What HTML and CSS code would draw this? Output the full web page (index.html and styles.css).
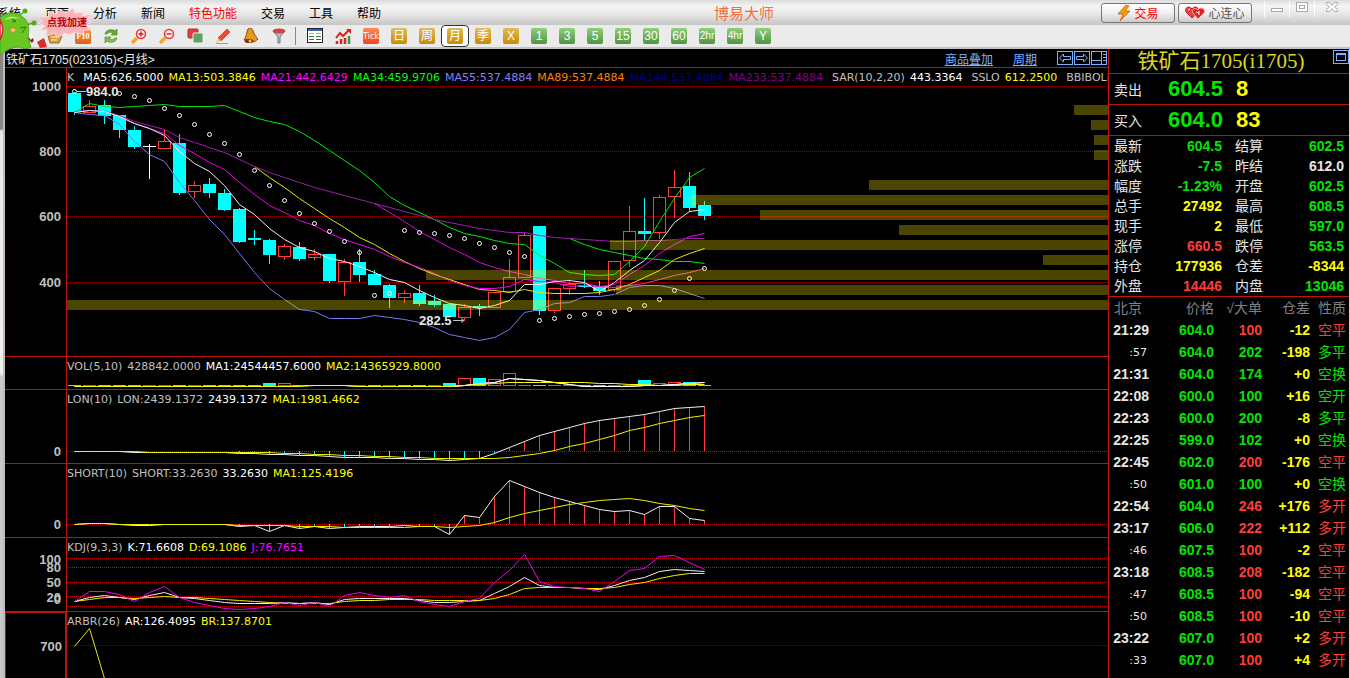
FILE: index.html
```html
<!DOCTYPE html>
<html lang="zh-CN">
<head>
  <meta charset="UTF-8" />
  <meta name="viewport" content="width=device-width, initial-scale=1.0"/>
  <title>博易大师</title>
  <link rel="stylesheet" href="styles.css">
</head>
<body>
  <header class="titlebar">
    <nav class="menu">
      <a href="#">系统</a>
      <a href="#">页面</a>
      <a href="#">分析</a>
      <a href="#">新闻</a>
      <a href="#" class="hot">特色功能</a>
      <a href="#">交易</a>
      <a href="#">工具</a>
      <a href="#">帮助</a>
    </nav>
    <h1 class="app-name">博易大师</h1>
    <div class="titlebar-right">
      <button class="pill trade">
        <svg width="14" height="16" viewBox="0 0 14 16"><path d="M9 0L1 9h5L3 16 13 6H8l4-5z" fill="#ff9a00" stroke="#a85a10" stroke-width=".7"/></svg>
        交易
      </button>
      <button class="pill">
        <svg width="20" height="14" viewBox="0 0 20 14"><path d="M7 12L1 6C-1 2 4-1 7 3c3-4 8-1 6 3z" fill="#f04040" stroke="#c81818"/><path d="M13 13L8 7c-2-4 2-6 5-3 3-4 8-1 6 3z" fill="#e62020" stroke="#ffb0b0"/><path d="M3 4l2-1M11 6l3 1M14 5v4" stroke="#fff" fill="none"/></svg>
        心连心
      </button>
      <div class="window-buttons">
        <button aria-label="最小化"><svg width="12" height="12"><rect x=".5" y="7.5" width="11" height="3"/></svg></button>
        <button aria-label="还原"><svg width="12" height="12"><rect x=".5" y="1.5" width="11" height="9"/><rect x="3.5" y="4.5" width="5" height="3"/></svg></button>
        <button aria-label="关闭"><svg width="12" height="12"><path d="M.5 1.5h3l2.500 3 2.500-3h3v2l-3 2.500 3 2.500v2h-3l-2.500-3-2.500 3h-3v-2l3-2.500-3-2.500z"/></svg></button>
      </div>
    </div>
  </header>

  <div class="toolbar">
    <button aria-label="首页"><svg width="16" height="16"><path d="M1 8l6-6 8 6-3 7H3z" fill="#d99a3a" stroke="#a86c1c"/><path d="M4 9h7M4 12h6" stroke="#fff0c8"/></svg></button>
    <button><span class="tile f10">F10</span></button>
    <button aria-label="刷新"><svg width="16" height="16"><path d="M2 6c1-5 8-5 10-3l2-2v6H8l2-2C8 4 5 4 4 6z" fill="#6aa92c" stroke="#3f7d14" stroke-width=".6"/><path d="M14 10c-1 5-8 5-10 3l-2 2V9h6l-2 2c2 1 5 1 6-1z" fill="#86bd4a" stroke="#3f7d14" stroke-width=".6"/></svg></button>
    <button aria-label="放大"><svg width="16" height="16"><path d="M1 15l5-5" stroke="#f5a81c" stroke-width="3.500"/><circle cx="10" cy="6" r="4.500" fill="#ffeaea" stroke="#e04040" stroke-width="1.600"/><path d="M7.500 6h5M10 3.500v5" stroke="#d02020" stroke-width="1.400"/></svg></button>
    <button aria-label="缩小"><svg width="16" height="16"><path d="M1 15l5-5" stroke="#f5a81c" stroke-width="3.500"/><circle cx="10" cy="6" r="4.500" fill="#ffeaea" stroke="#e04040" stroke-width="1.600"/><path d="M7.500 6h5" stroke="#d02020" stroke-width="1.400"/></svg></button>
    <button aria-label="叠加"><svg width="16" height="16"><rect x="1" y="1" width="10" height="9" rx="1" fill="#e23b3b" stroke="#b03030"/><rect x="6" y="5" width="10" height="10" rx="1" fill="#5fa268" stroke="#e4f0e4"/></svg></button>
    <button aria-label="画线"><svg width="16" height="16"><path d="M3 10L12 1l3 3-9 9z" fill="#ee4b2b" stroke="#b82a10" stroke-width=".6"/><path d="M3 10l3 3-5 2z" fill="#f2c894"/><path d="M1 15.500h12" stroke="#999"/></svg></button>
    <button aria-label="预警"><svg width="16" height="16"><path d="M5 1c2-2 5 0 5 2 1 3 3 6 5 8l-4 3C8 12 5 11 1 12c3-4 2-7 4-11z" fill="#e39a1e" stroke="#8c4a08"/><ellipse cx="6" cy="13" rx="4.500" ry="2" fill="#7a3608"/><circle cx="7" cy="13" r="1.500" fill="#f2c850"/></svg></button>
    <button aria-label="筛选"><svg width="16" height="16"><path d="M2 3l5 6v6h2V9l5-6z" fill="#b9bcc0" stroke="#74777a"/><ellipse cx="8" cy="3" rx="6" ry="2" fill="#e83a3a" stroke="#a05050"/></svg></button>
    <span class="divider"></span>
    <button aria-label="报价"><svg width="16" height="16"><rect x=".5" y=".5" width="15" height="14" fill="#fff" stroke="#222"/><path d="M1 2h14" stroke="#3c62b4" stroke-width="2"/><path d="M2 5.500h5M9 5.500h5" stroke="#e0b000"/><path d="M2 8.500h5M9 8.500h5M2 11.500h5M9 11.500h5" stroke="#2a7a2a"/></svg></button>
    <button aria-label="走势"><svg width="16" height="16"><path d="M2 16v-3M6 16v-5M10 16v-6" stroke="#e02020" stroke-width="2.500"/><path d="M14 16V8" stroke="#3a9a3a" stroke-width="2.500"/><path d="M1 10l4-5 3 3 6-6" fill="none" stroke="#e02020" stroke-width="2"/><path d="M11 1h5v5z" fill="#e02020"/></svg></button>
    <button><span class="tile tick">Tick</span></button>
    <button><span class="tile gold">日</span></button>
    <button><span class="tile gold">周</span></button>
    <button class="active"><span class="tile gold">月</span></button>
    <button><span class="tile gold">季</span></button>
    <button><span class="tile gold">X</span></button>
    <button><span class="tile green">1</span></button>
    <button><span class="tile green">3</span></button>
    <button><span class="tile green">5</span></button>
    <button><span class="tile green">15</span></button>
    <button><span class="tile green">30</span></button>
    <button><span class="tile green">60</span></button>
    <button><span class="tile green small">2hr</span></button>
    <button><span class="tile green small">4hr</span></button>
    <button><span class="tile green">Y</span></button>
  </div>

  <button class="mascot" aria-label="点我加速">
    <svg width="96" height="56">
      <path d="M27 32l7 8-2 3-5-5z" fill="#8c1c30"/>
      <path d="M28 30l6 6-3 4-5-6z" fill="#f4f4f4"/>
      <path d="M37 42l7-4 3 9-7 1z" fill="#dc2a2a"/>
      <path d="M18 16L24 12M26 25l7-2" stroke="#59a81e" stroke-width="1.500"/>
      <circle cx="25" cy="11" r="2.500" fill="#4fae1c"/><circle cx="34" cy="23" r="2.500" fill="#4fae1c"/>
      <path d="M0 18C6 11 18 11 25 19c5 6 4 13 3 18l3 10c-4 3-9 1-13 0C12 47 6 51 0 55z" fill="#67c720" stroke="#3f941a" stroke-width=".7"/>
      <path d="M4 20c5-5 12-4 16-1-5-1-11 0-16 1z" fill="#a6e860"/>
      <path d="M0 20c3 5 4 12 0 20z" fill="#fff" stroke="#d82828" stroke-width="1.500"/>
      <path d="M12 19l4 2-4 1M20 28l6-1-4 6" fill="none" stroke="#3d6a12"/>
      <ellipse cx="13" cy="30" rx="3" ry="2.500" fill="#f5c45a" stroke="#8a7a20" stroke-width=".6"/>
      <path d="M38 17l11 0-1-5 8 2 5-4 5 3 7-5 2 5 8-1-1 4 9-2-4 5 4 3-5 3 5 5-8 0 1 5-9-3-5 3-5-2-8 5-2-5-9 3 1-6-6 0 4-4-7-3 5-2z" fill="#f9b4b8" stroke="#fadede"/>
    </svg>
    <span>点我加速</span>
  </button>

  <main class="workspace">
    <aside class="side-strip"></aside>

    <section class="charts">
      <div class="chart-head">
        <h2>铁矿石1705(023105)&lt;月线&gt;</h2>
        <div class="chart-links">
          <a href="#">商品叠加</a>
          <a href="#">周期</a>
          <span class="frame-buttons">
            <button aria-label="向左"><svg width="16" height="14"><rect x=".5" y=".5" width="15" height="13"/><path d="M2.500 7l4-4v2.500h7v3h-7V11z"/></svg></button>
            <button aria-label="向右"><svg width="16" height="14"><rect x=".5" y=".5" width="15" height="13"/><path d="M13.500 7l-4-4v2.500h-7v3h7V11z"/></svg></button>
            <button aria-label="布局"><svg width="16" height="14"><rect x=".5" y=".5" width="15" height="13"/><path d="M10.500 1v12M1 9.500h9M12 3.500h3M12 6.500h3M12 9.500h3"/></svg></button>
          </span>
        </div>
      </div>

      <div class="panel price">
        <svg class="axis" data-panel="price"></svg>
        <div class="plot">
          <svg class="canvas" data-panel="price"></svg>
          <div class="profile" id="profile"></div>
          <p class="legend">
            <span class="gray k">K</span>
            <span class="white">MA5:626.5000</span>
            <span class="yellow">MA13:503.3846</span>
            <span class="magenta">MA21:442.6429</span>
            <span class="green">MA34:459.9706</span>
            <span class="blue">MA55:537.4884</span>
            <span class="orange">MA89:537.4884</span>
            <span class="navy">MA144:537.4884</span>
            <span class="purple">MA233:537.4884</span>
            <span class="gray next">SAR(10,2,20)</span>
            <span class="white">443.3364</span>
            <span class="gray next">SSLO</span>
            <span class="yellow">612.2500</span>
            <span class="gray next">BBIBOLL</span>
          </p>
        </div>
      </div>

      <div class="panel vol">
        <svg class="axis" data-panel="vol"></svg>
        <div class="plot">
          <svg class="canvas" data-panel="vol"></svg>
          <p class="legend"><span class="gray">VOL(5,10)</span> <span class="gray">428842.0000</span> <span class="white">MA1:24544457.6000</span> <span class="yellow">MA2:14365929.8000</span></p>
        </div>
      </div>

      <div class="panel">
        <svg class="axis" data-panel="lon"></svg>
        <div class="plot">
          <svg class="canvas" data-panel="lon"></svg>
          <p class="legend"><span class="gray">LON(10)</span> <span class="gray">LON:2439.1372</span> <span class="white">2439.1372</span> <span class="yellow">MA1:1981.4662</span></p>
        </div>
      </div>

      <div class="panel">
        <svg class="axis" data-panel="short"></svg>
        <div class="plot">
          <svg class="canvas" data-panel="short"></svg>
          <p class="legend"><span class="gray">SHORT(10)</span> <span class="gray">SHORT:33.2630</span> <span class="white">33.2630</span> <span class="yellow">MA1:125.4196</span></p>
        </div>
      </div>

      <div class="panel">
        <svg class="axis" data-panel="kdj"></svg>
        <div class="plot">
          <svg class="canvas" data-panel="kdj"></svg>
          <p class="legend"><span class="gray">KDJ(9,3,3)</span> <span class="white">K:71.6608</span> <span class="yellow">D:69.1086</span> <span class="magenta">J:76.7651</span></p>
        </div>
      </div>

      <div class="panel last">
        <svg class="axis selected" data-panel="arbr"></svg>
        <div class="plot">
          <svg class="canvas" data-panel="arbr"></svg>
          <p class="legend"><span class="gray">ARBR(26)</span> <span class="white">AR:126.4095</span> <span class="yellow">BR:137.8701</span></p>
        </div>
      </div>
    </section>

    <section class="quote">
      <div class="quote-head">
        <h2>铁矿石1705(i1705)</h2>
        <button aria-label="最大化"><svg width="16" height="14"><rect x=".5" y=".5" width="15" height="13"/><rect x="3.500" y="3.500" width="9" height="7"/><path d="M3 4.500h10"/></svg></button>
      </div>
      <div class="order"><span>卖出</span><b class="up">604.5</b><b class="yellow">8</b></div>
      <div class="order"><span>买入</span><b class="up">604.0</b><b class="yellow">83</b></div>

      <table class="stats">
        <tr><th>最新</th><td class="up">604.5</td><th>结算</th><td class="up">602.5</td></tr>
        <tr><th>涨跌</th><td class="up">-7.5</td><th>昨结</th><td class="plain">612.0</td></tr>
        <tr><th>幅度</th><td class="up">-1.23%</td><th>开盘</th><td class="up">602.5</td></tr>
        <tr><th>总手</th><td class="yellow">27492</td><th>最高</th><td class="up">608.5</td></tr>
        <tr><th>现手</th><td class="yellow">2</td><th>最低</th><td class="up">597.0</td></tr>
        <tr><th>涨停</th><td class="red">660.5</td><th>跌停</th><td class="up">563.5</td></tr>
        <tr><th>持仓</th><td class="yellow">177936</td><th>仓差</th><td class="yellow">-8344</td></tr>
        <tr><th>外盘</th><td class="red">14446</td><th>内盘</th><td class="up">13046</td></tr>
      </table>

      <table class="ticks">
        <thead>
          <tr><th>北京</th><th>价格</th><th>√大单</th><th>仓差</th><th>性质</th></tr>
        </thead>
        <tbody>
          <tr><td>21:29</td><td>604.0</td><td class="red">100</td><td>-12</td><td class="red">空平</td></tr>
          <tr><td class="sec">:57</td><td>604.0</td><td class="up">202</td><td>-198</td><td class="up">多平</td></tr>
          <tr><td>21:31</td><td>604.0</td><td class="up">174</td><td>+0</td><td class="up">空换</td></tr>
          <tr><td>22:08</td><td>600.0</td><td class="up">100</td><td>+16</td><td class="up">空开</td></tr>
          <tr><td>22:23</td><td>600.0</td><td class="up">200</td><td>-8</td><td class="up">多平</td></tr>
          <tr><td>22:25</td><td>599.0</td><td class="up">102</td><td>+0</td><td class="up">空换</td></tr>
          <tr><td>22:45</td><td>602.0</td><td class="red">200</td><td>-176</td><td class="red">空平</td></tr>
          <tr><td class="sec">:50</td><td>601.0</td><td class="up">100</td><td>+0</td><td class="up">空换</td></tr>
          <tr><td>22:54</td><td>604.0</td><td class="red">246</td><td>+176</td><td class="red">多开</td></tr>
          <tr><td>23:17</td><td>606.0</td><td class="red">222</td><td>+112</td><td class="red">多开</td></tr>
          <tr><td class="sec">:46</td><td>607.5</td><td class="red">100</td><td>-2</td><td class="red">空平</td></tr>
          <tr><td>23:18</td><td>608.5</td><td class="red">208</td><td>-182</td><td class="red">空平</td></tr>
          <tr><td class="sec">:47</td><td>608.5</td><td class="red">100</td><td>-94</td><td class="red">空平</td></tr>
          <tr><td class="sec">:50</td><td>608.5</td><td class="red">100</td><td>-10</td><td class="red">空平</td></tr>
          <tr><td>23:22</td><td>607.0</td><td class="red">100</td><td>+2</td><td class="red">多开</td></tr>
          <tr><td class="sec">:33</td><td>607.0</td><td class="red">100</td><td>+4</td><td class="red">多开</td></tr>
        </tbody>
      </table>
    </section>
  </main>

  <script src="script.js"></script>
</body>
</html>
```
FILE: styles.css
```css
:root {
  --line: #c01408;
  --up: #00e600;
  --down: #ff3c3c;
  --cjk: "Noto Sans CJK SC", sans-serif;
  --small: "DejaVu Sans", "Noto Sans CJK SC", sans-serif;
}

* {
  box-sizing: border-box;
}

body {
  margin: 0;
  height: 100vh;
  display: flex;
  flex-direction: column;
  overflow: hidden;
  background: #000;
  color: #e6e6e6;
  font: 12px "Liberation Sans", var(--cjk);
}

h1, h2, p {
  margin: 0;
  font-weight: normal;
}

button {
  padding: 0;
  border: 0;
  background: none;
  font: inherit;
  color: inherit;
  cursor: pointer;
}

svg {
  display: block;
}

/* colours shared by legends and tables */
.white { color: #fff; }
.gray { color: #c0c0c0; }
.yellow { color: #ff0; }
.magenta { color: #f0f; }
.green { color: #0f0; }
.blue { color: #8080ff; }
.orange { color: #ff8000; }
.navy { color: #000080; }
.purple { color: #800080; }
.up { color: var(--up); }
.red { color: var(--down); }
.plain { color: #e6e6e6; }

/* title bar */
.titlebar {
  flex: none;
  height: 25px;
  display: flex;
  justify-content: space-between;
  align-items: center;
  background: linear-gradient(#dcdcdc, #f4f4f4 25%, #e8e8e8 55%, #c6c6c6);
  color: #000;
}

.menu {
  display: flex;
  gap: 24px;
  margin-left: -3px;
}

.menu a {
  color: #000;
  text-decoration: none;
}

.menu .hot {
  color: #f00;
}

.app-name {
  padding-left: 6px;
  font-size: 15px;
  color: #f4703c;
}

.titlebar-right {
  display: flex;
  align-items: center;
  height: 100%;
  gap: 3px;
}

.pill {
  width: 74px;
  height: 20px;
  display: flex;
  align-items: center;
  justify-content: center;
  gap: 3px;
  border: 1px solid #777;
  border-radius: 3px;
  background: linear-gradient(#fff, #f0f0f0 50%, #ccc);
  color: #555;
}

.trade {
  color: #f00;
}

.window-buttons {
  display: flex;
  height: 16px;
  margin: 0 0 8px 9px;
}

.window-buttons button {
  width: 25px;
  display: flex;
  justify-content: center;
  border-left: 1px solid #fff;
}

.window-buttons button:last-child {
  width: 36px;
}

.window-buttons svg {
  fill: #fff;
  stroke: #a8a8a8;
}

/* toolbar */
.toolbar {
  flex: none;
  height: 24px;
  display: flex;
  padding-left: 41px;
  background: #ebebeb;
  border-bottom: 2px solid #c4c0c4;
}

.toolbar button {
  width: 28px;
  display: flex;
  align-items: center;
  justify-content: center;
}

.toolbar .active {
  border: 1px solid #333;
  border-radius: 4px;
  background: #fff;
}

.divider {
  width: 1px;
  height: 18px;
  margin: 2px 5px 0 2px;
  background: #888;
}

.tile {
  width: 16px;
  height: 16px;
  border-radius: 2px;
  display: flex;
  align-items: center;
  justify-content: center;
  overflow: hidden;
  font-size: 12px;
  line-height: 16px;
  color: #fff;
}

.gold { background: linear-gradient(#e0bc58, #c98a00); }
.tile.green { background: linear-gradient(#8fce7c, #4f9442); color: #fff; }
.tick { background: linear-gradient(#ff8a50, #ee4418); font: 9px "DejaVu Sans Condensed", sans-serif; }
.f10 { background: linear-gradient(#f7a040, #e85a10); font: bold 8px "Liberation Serif", serif; }
.tile.small { font-size: 10px; }

/* floating helper */
.mascot {
  position: absolute;
  left: 0;
  top: 0;
  z-index: 2;
}

.mascot span {
  position: absolute;
  left: 47px;
  top: 15px;
  font: bold 10px/14px var(--cjk);
  color: #c00010;
  white-space: nowrap;
}

/* workspace */
.workspace {
  flex: 1;
  min-height: 0;
  display: flex;
}

.side-strip {
  flex: none;
  width: 5px;
  background: linear-gradient(#888 80px, #e8e8e8 82px, #f2f0ec 324px, #c8c8c8 328px);
  border-right: 2px solid #c4b8b8;
}

.charts {
  flex: 1;
  min-width: 0;
  display: flex;
  flex-direction: column;
}

.chart-head {
  height: 19px;
  flex: none;
  display: flex;
  justify-content: space-between;
  align-items: center;
  padding: 0 1px;
  border-bottom: 1px solid var(--line);
}

.chart-head h2 {
  font-size: 12px;
}

.chart-links {
  display: flex;
  align-items: center;
  gap: 20px;
}

.chart-links a {
  color: #7ab4ff;
}

.frame-buttons {
  display: flex;
  gap: 1px;
}

.frame-buttons svg,
.quote-head svg {
  fill: none;
  stroke: #7ab4ff;
}

.panel {
  flex: none;
  height: 74px;
  display: flex;
  border-bottom: 1px solid var(--line);
}

.panel.price { height: 289px; }
.panel.vol { height: 33px; }

.panel.last {
  flex: 1;
  min-height: 0;
  border-bottom: 0;
}

.axis {
  flex: none;
  width: 62px;
  height: 100%;
  border-right: 1px solid var(--line);
  fill: #c0c0c0;
  font: bold 13px "Liberation Sans", sans-serif;
  text-anchor: end;
}

.axis.selected {
  border: 1px solid var(--line);
  border-right-width: 2px;
  border-bottom: 0;
}

.plot {
  flex: 1;
  min-width: 0;
  position: relative;
  overflow: hidden;
}

.canvas {
  width: 100%;
  height: 100%;
}

.legend {
  position: absolute;
  left: 0;
  top: 1px;
  display: flex;
  gap: 5px;
  font: 11px/18px var(--small);
  white-space: nowrap;
}

.legend .k { margin-right: 4px; }
.legend .next { margin-left: 4px; }

.profile {
  position: absolute;
  right: 0;
  top: 37px;
  width: 100%;
  display: flex;
  flex-direction: column;
  align-items: flex-end;
  gap: 5px;
}

.profile div {
  height: 10px;
  max-width: 100%;
  background: rgba(255, 240, 0, 0.29);
}

.grid { stroke: #c00c0c; stroke-dasharray: 1 1; }
.dim { stroke: #960000; }
.canvas polyline { fill: none; }
.canvas .tag { fill: #e6e6e6; font: bold 13px "Liberation Sans", sans-serif; }

/* quote column */
.quote {
  flex: none;
  width: 242px;
  border-left: 1px solid var(--line);
  border-right: 1px solid #d8d0d0;
}

.quote-head {
  height: 25px;
  display: flex;
  justify-content: flex-end;
  border-bottom: 1px solid var(--line);
}

.quote-head h2 {
  flex: 1;
  text-align: center;
  font: 21px/24px "Liberation Serif", var(--cjk);
  color: #d8d820;
}

.quote-head button {
  align-self: flex-start;
  margin-top: 1px;
}

.order {
  height: 31px;
  display: flex;
  align-items: center;
  padding-left: 5px;
  border-bottom: 1px solid var(--line);
  font-size: 14px;
}

.order b {
  font-size: 22px;
}

.order span { width: 54px; }
.order .up { width: 68px; }

table {
  border-collapse: collapse;
  table-layout: fixed;
  width: 100%;
}

th, td {
  padding: 0;
  font-size: 14px;
  line-height: 20px;
  white-space: nowrap;
}

th {
  font-weight: normal;
  text-align: left;
}

td {
  font-weight: bold;
  text-align: right;
}

.stats {
  border-bottom: 1px solid var(--line);
}

.stats th { padding-left: 5px; }
.stats td { padding-right: 5px; }
.stats th:nth-child(3) { padding-left: 8px; }
.stats th:first-child { width: 41px; }
.stats td:nth-child(2) { width: 77px; }
.stats th:nth-child(3) { width: 44px; }

.ticks th,
.ticks td {
  height: 22px;
  text-align: right;
  padding-right: 4px;
}

.ticks th { color: #808080; }
.ticks th:nth-child(1) { width: 44px; text-align: left; padding-left: 5px; }
.ticks th:nth-child(2) { width: 65px; }
.ticks th:nth-child(3) { width: 48px; }
.ticks th:nth-child(4) { width: 48px; }
.ticks th:last-child,
.ticks td:last-child { padding-right: 3px; font-weight: normal; }
.ticks td:nth-child(2) { color: var(--up); }
.ticks td:nth-child(4) { color: #ff0; }
.ticks .sec { font: 11px var(--small); padding-right: 6px; }
```
FILE: script.js
```js
const NS = 'http://www.w3.org/2000/svg';
const STEP = 15;
const CYAN = '#00ffff';
const RED = '#ff3c3c';

// y of the top edge of each panel; all series below share one y scale
const panels = {
  price: { top: 68, grid: [86, 151, 216, 282], dim: true, labels: [['1000', 86], ['800', 151], ['600', 216], ['400', 282]] },
  vol: { top: 357, grid: [], labels: [] },
  lon: { top: 390, grid: [451], labels: [['0', 451]] },
  short: { top: 464, grid: [524], labels: [['0', 524]] },
  kdj: { top: 538, grid: [558, 567, 582, 596, 606], labels: [['100', 559], ['80', 567], ['50', 582], ['20', 597], ['0', 599]] },
  arbr: { top: 612, grid: [645], dim: true, labels: [['700', 645]] }
};

// type, body top, body bottom, wick top, wick bottom
const candles = [
  ['c', 93, 112, 92, 115], ['r', 106, 113, 100, 113], ['c', 105, 116, 100, 124], ['c', 115, 130, 115, 138],
  ['c', 130, 147, 126, 149], ['w', 146, 147, 144, 179], ['r', 141, 149, 130, 149], ['c', 143, 193, 134, 195],
  ['r', 185, 192, 181, 198], ['c', 184, 193, 178, 198], ['c', 193, 210, 189, 211], ['c', 209, 242, 208, 243],
  ['c', 238, 240, 230, 245], ['c', 240, 255, 239, 264], ['r', 246, 257, 244, 260], ['c', 247, 259, 242, 261],
  ['r', 254, 258, 249, 260], ['c', 254, 281, 254, 283], ['r', 262, 282, 259, 296], ['c', 262, 275, 249, 282],
  ['c', 274, 285, 270, 285], ['c', 285, 298, 284, 308], ['r', 293, 298, 290, 303], ['c', 293, 304, 285, 306],
  ['c', 301, 305, 295, 307], ['c', 304, 317, 304, 317], ['r', 307, 318, 304, 321], ['c', 306, 308, 304, 316],
  ['r', 292, 308, 292, 308], ['r', 277, 292, 259, 292], ['r', 235, 278, 233, 278], ['c', 226, 311, 226, 315],
  ['r', 288, 311, 288, 313], ['r', 284, 289, 280, 295], ['c', 285, 287, 270, 288], ['c', 286, 291, 281, 295],
  ['r', 261, 290, 261, 292], ['r', 231, 261, 206, 267], ['c', 231, 234, 198, 240], ['r', 197, 233, 195, 239],
  ['r', 187, 197, 170, 218], ['c', 186, 208, 172, 212], ['c', 205, 216, 201, 220]
];

const sar = [91, null, null, 93, 96, 100, 108, 115, 124, 134, 143, 154, 170, 185, 200, 213, 223, 231, 241, 252,
  295, 293, 230, 232, 233, 235, 238, 243, 247, 252, 256, 320, 318, 316, 314, 313, 311, 309, 305, 299, 290, 278, 268];

// colour, first bar, values
const priceLines = [
  ['#00e800', 0, [112, 103, 106, 107, 106, 105, 104, 106, 106, 106, 105, 111, 117, 121, 124, 131, 140, 150, 160, 170, 182, 196, 205, 212, 219, 227, 233, 236, 240, 243, 244, 255, 263, 272, 274, 275, 274, 261, 246, 221, 198, 177, 168]],
  ['#00e800', 33, [238, 244, 249, 252, 255, 258, 259, 261, 261, 263]],
  ['#e8e800', 12, [166, 177, 187, 198, 208, 218, 227, 237, 244, 253, 261, 268, 274, 279, 284, 289, 290, 292, 289, 292, 293, 293, 293, 292, 289, 284, 277, 270, 259, 253, 248]],
  ['#f000f0', 0, [111, 110, 111, 116, 123, 128, 133, 145, 153, 162, 169, 182, 194, 205, 212, 220, 225, 233, 239, 244, 249, 256, 262, 267, 273, 280, 285, 288, 288, 286, 279, 281, 282, 286, 285, 286, 284, 274, 265, 253, 244, 236, 233]],
  ['#e800e8', 20, [203, 212, 221, 231, 239, 247, 254, 262, 267, 271, 274]],
  ['#e838b0', 30, [274, 278, 280, 283, 283, 286, 287, 285, 283, 279, 275, 272, 268]],
  ['#9c20ac', 0, [112, 110, 111, 115, 121, 125, 129, 137, 142, 147, 152, 159, 166, 172, 177, 182, 187, 191, 195, 199, 203, 207, 211, 215, 219, 222, 225, 228, 230, 232, 232, 235, 237, 238, 239, 240, 241, 241, 240, 240, 239, 238, 238]],
  ['#7878f0', 0, [112, 114, 115, 124, 141, 154, 161, 182, 200, 219, 234, 253, 272, 288, 299, 309, 311, 318, 318, 318, 315, 317, 319, 322, 327, 334, 337, 340, 337, 329, 312, 309, 303, 302, 296, 296, 294, 287, 285, 285, 288, 293, 298]],
  ['#f0f0f0', 0, [112, 110, 111, 116, 123, 128, 135, 151, 163, 171, 185, 204, 214, 228, 239, 247, 251, 258, 261, 266, 272, 279, 282, 290, 297, 303, 305, 308, 305, 300, 284, 284, 281, 280, 282, 291, 282, 270, 260, 242, 222, 211, 209]]
];

// widths of the volume-at-price bars, top to bottom
const profile = [34, 17, 14, 14, 0, 239, 416, 348, 209, 498, 65, 682, 492, 1041];

const volBars = 'crcccrrcrccccCRccrcrcrccrCRCRRrcrrccrrCRRCc';
const volTops = { 13: 383, 14: 383, 25: 383, 26: 378, 27: 378, 28: 379, 29: 373, 38: 380, 39: 383, 40: 382, 41: 382 };
const volWhite = [386, 386, 386, 386, 386, 386, 386, 386, 386, 386, 386, 386, 386, 386, 386, 385, 385, 385, 385, 386, 386, 386, 386, 386, 386, 386, 385, 383, 382, 378, 379, 380, 382, 384, 386, 386, 386, 386, 385, 385, 384, 383, 382];
const volYellow = [386, 386, 386, 386, 386, 386, 386, 386, 386, 386, 386, 386, 386, 386, 386, 386, 385, 385, 385, 386, 386, 386, 386, 386, 386, 386, 385, 384, 383, 382, 382, 382, 382, 382, 382, 383, 383, 384, 384, 385, 385, 384, 384];

const lonWhite = [451, 451, 451, 451, 452, 452, 452, 452, 452, 452, 452, 453, 453, 454, 454, 455, 455, 456, 457, 457, 457, 458, 458, 459, 459, 460, 459, 458, 453, 447, 441, 435, 431, 427, 423, 420, 418, 416, 414, 411, 408, 407, 406];
const lonYellow = [451, 451, 451, 451, 451, 452, 452, 452, 452, 452, 452, 452, 452, 452, 453, 453, 454, 454, 455, 455, 456, 456, 457, 457, 458, 458, 458, 458, 458, 457, 455, 453, 450, 446, 443, 439, 435, 430, 427, 423, 420, 417, 415];

const shortWhite = [524, 523, 523, 524, 525, 525, 524, 524, 524, 524, 524, 526, 525, 531, 525, 528, 526, 528, 527, 526, 526, 526, 525, 526, 526, 534, 515, 517, 496, 480, 486, 492, 497, 501, 505, 509, 511, 510, 514, 506, 506, 518, 520];
const shortYellow = [524, 523, 523, 524, 524, 524, 524, 524, 524, 524, 524, 525, 525, 525, 525, 526, 526, 526, 527, 527, 527, 527, 527, 526, 526, 527, 526, 525, 522, 517, 513, 510, 507, 504, 502, 500, 499, 498, 500, 503, 505, 508, 510];

const kdjK = [601, 597, 595, 597, 599, 595, 592, 597, 598, 600, 602, 603, 603, 603, 602, 603, 602, 604, 599, 598, 598, 598, 598, 600, 602, 602, 601, 600, 593, 586, 577, 585, 587, 587, 588, 589, 585, 580, 577, 571, 569, 570, 571];
const kdjD = [601, 599, 597, 597, 598, 597, 596, 597, 597, 598, 599, 600, 601, 602, 603, 603, 603, 603, 601, 600, 600, 599, 599, 599, 600, 600, 600, 600, 598, 594, 588, 587, 587, 587, 588, 588, 587, 584, 582, 578, 575, 573, 573];
const kdjJ = [601, 591, 591, 594, 601, 592, 586, 597, 602, 605, 608, 609, 608, 606, 602, 605, 602, 606, 595, 592, 595, 597, 595, 601, 604, 606, 601, 598, 582, 570, 554, 581, 586, 587, 588, 591, 581, 570, 568, 556, 555, 562, 569];

function el(parent, name, attrs, text) {
  const node = document.createElementNS(NS, name);
  for (const key in attrs) node.setAttribute(key, attrs[key]);
  if (text) node.textContent = text;
  parent.appendChild(node);
  return node;
}

const centre = (i) => 7.5 + i * STEP;

function setup(name) {
  const p = panels[name];
  const axis = document.querySelector(`.axis[data-panel=${name}]`);
  p.labels.forEach(([text, y]) => el(axis, 'text', { x: 56, y: y - p.top + 5 }, text));
  const svg = document.querySelector(`.canvas[data-panel=${name}]`);
  p.grid.forEach((y) => {
    const ly = y - p.top + 0.5;
    el(svg, 'line', { x1: 1, x2: '100%', y1: ly, y2: ly, class: p.dim ? 'grid dim' : 'grid' });
  });
  return el(svg, 'g', { transform: `translate(0 ${-p.top})` });
}

function line(g, colour, values, start = 0) {
  const points = values.map((y, i) => `${centre(start + i)},${y + 0.5}`).join(' ');
  el(g, 'polyline', { points, stroke: colour });
}

function bar(g, i, type, top, bottom) {
  const x = centre(i);
  if (type === 'r' && bottom - top > 1) {
    el(g, 'rect', { x: x - 6, y: top + 0.5, width: 12, height: bottom - top - 1, fill: 'none', stroke: RED });
  } else {
    const fill = { r: RED, w: '#fff', c: CYAN }[type];
    el(g, 'rect', { x: x - 6.5, y: top, width: 13, height: bottom - top, fill });
  }
}

function drawPrice() {
  const g = setup('price');
  candles.forEach(([type, top, bottom, high, low], i) => {
    const x = centre(i);
    const stroke = type === 'r' ? RED : type === 'w' ? '#fff' : CYAN;
    if (high < top) el(g, 'line', { x1: x, x2: x, y1: high, y2: top, stroke });
    if (low > bottom) el(g, 'line', { x1: x, x2: x, y1: bottom, y2: low, stroke });
    bar(g, i, type, top, bottom);
  });
  priceLines.forEach(([colour, start, values]) => line(g, colour, values, start));
  sar.forEach((y, i) => {
    if (y) el(g, 'circle', { cx: centre(i), cy: y + 0.5, r: 2, fill: 'none', stroke: '#fff' });
  });
  el(g, 'path', { d: 'M9 91.5h10M386 320.500h11m-3-2l3 2-3 2', stroke: '#c0c0c0', fill: 'none' });
  el(g, 'text', { x: 19, y: 96, class: 'tag' }, '984.0');
  el(g, 'text', { x: 352, y: 325, class: 'tag' }, '282.5');

  const box = document.getElementById('profile');
  profile.forEach((w) => {
    const div = document.createElement('div');
    div.style.width = `${w}px`;
    box.appendChild(div);
  });
}

function drawVolume() {
  const g = setup('vol');
  line(g, '#fff', volWhite);
  [...volBars].forEach((c, i) => bar(g, i, c.toLowerCase(), volTops[i] || 385, 386));
  line(g, '#fff', volWhite.slice(25), 25);
  line(g, '#ff0', volYellow);
}

function drawHistogram(name, base, white, yellow) {
  const g = setup(name);
  white.forEach((y, i) => {
    const x = centre(i);
    if (Math.abs(y - base) > 1) el(g, 'line', { x1: x, x2: x, y1: base, y2: y, stroke: y > base ? CYAN : RED });
  });
  line(g, '#f0f0f0', white);
  line(g, '#f0f000', yellow);
}

drawPrice();
drawVolume();
drawHistogram('lon', 451, lonWhite, lonYellow);
drawHistogram('short', 524, shortWhite, shortYellow);

const kdj = setup('kdj');
line(kdj, '#f0f0f0', kdjK);
line(kdj, '#f0f000', kdjD);
line(kdj, '#f000f0', kdjJ);

line(setup('arbr'), '#e8e800', [646, 628, 678, 740]);
```
